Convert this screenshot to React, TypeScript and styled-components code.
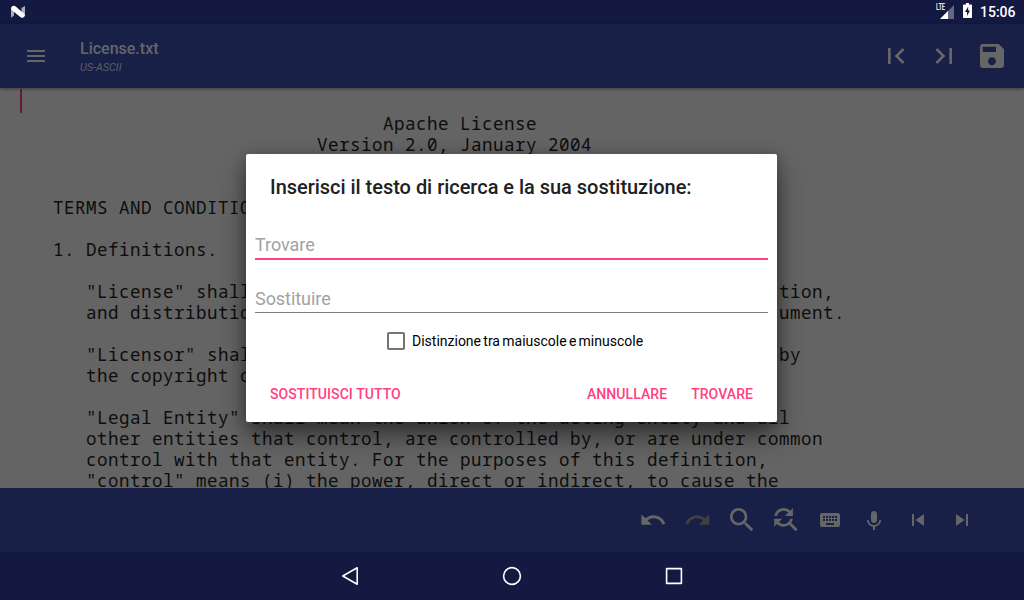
import React from "react";
import styled, { createGlobalStyle } from "styled-components";

const GlobalStyle = createGlobalStyle`
  * { box-sizing: border-box; }
  body { margin: 0; overflow: hidden; font-family: Roboto, "Liberation Sans", sans-serif; }
`;

const Screen = styled.div`
  position: relative;
  display: flex;
  flex-direction: column;
  width: 1024px;
  height: 600px;
  overflow: hidden;
  background: #646464;
`;

const StatusBar = styled.header`
  display: flex;
  align-items: center;
  justify-content: space-between;
  height: 24px;
  flex: none;
  padding: 0 8px 0 10px;
  background: #131940;
`;

const StatusIcons = styled.div`
  display: flex;
  align-items: center;
  height: 24px;
`;

const Network = styled.span`
  align-self: flex-start;
  width: 10px;
  margin: 2px -6px 0 0;
  font: 700 9px/11px Roboto, sans-serif;
  color: #e8e8ee;
  transform: scaleX(0.62);
  transform-origin: left center;
`;

const SignalIcon = styled.svg`
  flex: none;
`;

const BatteryIcon = styled.svg`
  flex: none;
  margin: 0 0 3px 9px;
`;

const Clock = styled.time`
  margin-left: 8px;
  width: 36px;
  font: 500 14px/24px Roboto, sans-serif;
  color: #fff;
  white-space: nowrap;
`;

const AppBar = styled.div`
  position: relative;
  z-index: 1;
  display: flex;
  align-items: center;
  height: 64px;
  flex: none;
  padding: 0 16px 0 24px;
  background: #192048;
  color: #666;
  box-shadow: 0 1px 3px rgba(0, 0, 0, 0.4);
`;

const Titles = styled.div`
  flex: 1;
  margin-left: 32px;
  padding-top: 3px;
`;

const FileName = styled.h1`
  margin: 0;
  font: 500 16px/20px Roboto, sans-serif;
`;

const Encoding = styled.p`
  margin: 0;
  padding-top: 1px;
  font: italic 400 11px/16px Roboto, sans-serif;
  letter-spacing: -0.1px;
  color: #5b5d65;
`;

const Actions = styled.div`
  display: flex;
  gap: 16px;
`;

const Editor = styled.main`
  display: flex;
  align-items: flex-start;
  height: 400px;
  flex: none;
  overflow: hidden;
  padding: 1px 0 0 20px;
`;

const Caret = styled.span`
  width: 2px;
  height: 24px;
  margin-right: -2px;
  background: #661a34;
`;

const Source = styled.pre`
  margin: 3px 0 0;
  font-family: "Droid Sans Mono", "Noto Sans Mono", "DejaVu Sans Mono", monospace;
  font-size: 17.5px;
  line-height: 21px;
  letter-spacing: 0.5px;
  color: #0d0d0d;
`;

const Toolbar = styled.div`
  display: flex;
  align-items: center;
  justify-content: flex-end;
  height: 64px;
  flex: none;
  padding-right: 40px;
  background: #192048;
  color: #666;
`;

const ToolButton = styled.span<{ $disabled?: boolean }>`
  display: flex;
  align-items: center;
  justify-content: center;
  width: 44px;
  height: 44px;
  color: ${(p) => (p.$disabled ? "#404040" : "#666")};
`;

const NavBar = styled.nav`
  display: flex;
  align-items: center;
  justify-content: center;
  gap: 138px;
  height: 48px;
  flex: none;
  background: #131940;
`;

const Dialog = styled.section`
  position: absolute;
  z-index: 2;
  left: 246px;
  top: 154px;
  width: 531px;
  height: 268px;
  padding: 20px 9px 0;
  border-radius: 2px;
  background: #fff;
  box-shadow: 0 14px 26px rgba(0, 0, 0, 0.45), 0 2px 14px rgba(0, 0, 0, 0.25);
`;

const DialogTitle = styled.h2`
  margin: 0 15px 33px;
  font: 500 20px/26px Roboto, sans-serif;
  letter-spacing: -0.025px;
  color: #212121;
  white-space: nowrap;
`;

const Field = styled.div<{ $focused?: boolean }>`
  height: ${(p) => (p.$focused ? 27 : 26)}px;
  margin-bottom: ${(p) => (p.$focused ? 27 : 0)}px;
  border-bottom: ${(p) => (p.$focused ? "2px solid #ff4081" : "1px solid #7c7c7c")};
  font: 400 18px/24px Roboto, sans-serif;
  letter-spacing: -0.05px;
  color: #a2a2a2;
`;

const CheckRow = styled.label`
  display: flex;
  align-items: center;
  margin: 19px 0 0 132px;
  height: 18px;
  gap: 7px;
  font: 400 14px/18px Roboto, sans-serif;
  word-spacing: -1.2px;
  color: #000;
  white-space: nowrap;
`;

const Box = styled.span`
  width: 18px;
  height: 18px;
  border: 2px solid #747474;
  border-radius: 2px;
`;

const DialogActions = styled.div`
  display: flex;
  gap: 24px;
  margin: 34px 15px 0;
`;

const DialogButton = styled.span<{ $start?: boolean }>`
  margin-right: ${(p) => (p.$start ? "auto" : "0")};
  font: 500 14px/20px Roboto, sans-serif;
  letter-spacing: 0.07px;
  color: #ff4081;
  white-space: nowrap;
`;

const icons = {
  menu: "M3 18h18v-2H3v2zm0-5h18v-2H3v2zm0-7v2h18V6H3z",
  first: "M18.41 16.59L13.82 12l4.59-4.59L17 6l-6 6 6 6zM6 6h2v12H6z",
  last: "M5.59 7.41L10.18 12l-4.59 4.59L7 18l6-6-6-6zM16 6h2v12h-2z",
  save: "M17 3H5c-1.11 0-2 .9-2 2v14c0 1.1.89 2 2 2h14c1.1 0 2-.9 2-2V7l-4-4zm-5 16c-1.66 0-3-1.34-3-3s1.34-3 3-3 3 1.34 3 3-1.34 3-3 3zm3-10H5V5h10v4z",
  undo: "M12.5 8c-2.65 0-5.05.99-6.9 2.6L2 7v9h9l-3.62-3.62c1.39-1.16 3.16-1.88 5.12-1.88 3.54 0 6.55 2.31 7.6 5.5l2.37-.78C21.08 11.03 17.15 8 12.5 8z",
  redo: "M18.4 10.6C16.55 8.99 14.15 8 11.5 8c-4.65 0-8.58 3.03-9.96 7.22L3.9 16c1.05-3.19 4.05-5.5 7.6-5.5 1.95 0 3.73.72 5.12 1.88L13 16h9V7l-3.6 3.6z",
  search: "M15.5 14h-.79l-.28-.27C15.41 12.59 16 11.11 16 9.5 16 5.91 13.09 3 9.5 3S3 5.91 3 9.5 5.91 16 9.5 16c1.61 0 3.09-.59 4.23-1.57l.27.28v.79l5 4.99L20.49 19l-4.99-5zm-6 0C7.01 14 5 11.99 5 9.5S7.01 5 9.5 5 14 7.01 14 9.5 11.99 14 9.5 14z",
  replace: "M11 6c1.38 0 2.63.56 3.54 1.46L12 10h6V4l-2.05 2.05C14.68 4.78 12.93 4 11 4c-3.53 0-6.43 2.61-6.92 6H6.1c.46-2.28 2.48-4 4.9-4zm5.64 9.14c.66-.9 1.12-1.97 1.28-3.14H15.9c-.46 2.28-2.48 4-4.9 4-1.38 0-2.63-.56-3.54-1.46L10 12H4v6l2.05-2.05C7.32 17.22 9.07 18 11 18c1.55 0 2.98-.51 4.14-1.36L20 21.49 21.49 20l-4.85-4.86z",
  keyboard: "M20 5H4c-1.1 0-1.99.9-1.99 2L2 17c0 1.1.9 2 2 2h16c1.1 0 2-.9 2-2V7c0-1.1-.9-2-2-2zm-9 3h2v2h-2V8zm0 3h2v2h-2v-2zM8 8h2v2H8V8zm0 3h2v2H8v-2zm-1 2H5v-2h2v2zm0-3H5V8h2v2zm9 7H8v-2h8v2zm0-4h-2v-2h2v2zm0-3h-2V8h2v2zm3 3h-2v-2h2v2zm0-3h-2V8h2v2z",
  mic: "M12 14c1.66 0 2.99-1.34 2.99-3L15 5c0-1.66-1.34-3-3-3S9 3.34 9 5v6c0 1.66 1.34 3 3 3zm5.3-3c0 3-2.54 5.1-5.3 5.1S6.7 14 6.7 11H5c0 3.41 2.72 6.23 6 6.72V21h2v-3.28c3.28-.48 6-3.3 6-6.72h-1.7z",
  previous: "M6 6h2v12H6zm3.5 6l8.5 6V6z",
  next: "M6 18l8.5-6L6 6v12zM16 6v12h2V6h-2z",
};

type IconName = keyof typeof icons;

const Glyph = ({ name, size = 24, box = "0 0 24 24" }: { name: IconName; size?: number; box?: string }) => (
  <svg width={size} height={size} viewBox={box} fill="currentColor" aria-hidden="true">
    <path d={icons[name]} />
  </svg>
);

const tools: { name: IconName; size?: number; box?: string; disabled?: boolean }[] = [
  { name: "undo", size: 28, box: "0.8 0 24 24" },
  { name: "redo", size: 28, box: "0.3 0 24 24", disabled: true },
  { name: "search", size: 32 },
  { name: "replace", size: 32, box: "0.8 1 24 24" },
  { name: "keyboard" },
  { name: "mic", box: "0 -1 24 24" },
  { name: "previous" },
  { name: "next" },
];

const license = `
                                 Apache License
                           Version 2.0, January 2004
                        http://www.apache.org/licenses/

   TERMS AND CONDITIONS FOR USE, REPRODUCTION, AND DISTRIBUTION

   1. Definitions.

      "License" shall mean the terms and conditions for use, reproduction,
      and distribution as defined by Sections 1 through 9 of this document.

      "Licensor" shall mean the copyright owner or entity authorized by
      the copyright owner that is granting the License.

      "Legal Entity" shall mean the union of the acting entity and all
      other entities that control, are controlled by, or are under common
      control with that entity. For the purposes of this definition,
      "control" means (i) the power, direct or indirect, to cause the`;

export default function App() {
  return (
    <>
      <GlobalStyle />
      <Screen>
        <StatusBar>
          <svg width="16" height="14" viewBox="0 0 16 14">
            <path d="M1 3 4 1v9.500L1 12.700zM11.500 3 15 1v10l-3.500 2z" fill="#a9abc0" />
            <path d="M1.200 3C1.500.9 4 .2 5.400 1.300l9 7.800c1 1.200-.2 3.500-2 3.700-.9 0-1.500-.3-2.100-.8L1.600 5z" fill="#fff" />
          </svg>
          <StatusIcons>
            <Network>LTE</Network>
            <SignalIcon width="14" height="14" viewBox="0 0 14 14">
              <path d="M14 0v14H0z" fill="#62668a" />
              <path d="M8 6v8H0z" fill="#fff" />
            </SignalIcon>
            <BatteryIcon width="9" height="15" viewBox="0 0 9 15">
              <path d="M3 0h3v1.500h2c.6 0 1 .4 1 1V14c0 .6-.4 1-1 1H1c-.6 0-1-.4-1-1V2.500c0-.6.4-1 1-1h2z" fill="#fff" />
              <path d="M5.200 3.500 2 9h2v4l3-5.500H5.200z" fill="#131940" />
            </BatteryIcon>
            <Clock>15:06</Clock>
          </StatusIcons>
        </StatusBar>
        <AppBar>
          <Glyph name="menu" />
          <Titles>
            <FileName>License.txt</FileName>
            <Encoding>US-ASCII</Encoding>
          </Titles>
          <Actions>
            <Glyph name="first" size={32} />
            <Glyph name="last" size={32} />
            <Glyph name="save" size={32} />
          </Actions>
        </AppBar>
        <Editor>
          <Caret />
          <Source>{license}</Source>
        </Editor>
        <Toolbar>
          {tools.map(({ disabled, ...icon }) => (
            <ToolButton key={icon.name} $disabled={disabled}>
              <Glyph {...icon} />
            </ToolButton>
          ))}
        </Toolbar>
        <NavBar>
          <svg width="24" height="24" viewBox="0 0 24 24" fill="none" stroke="#fff" strokeWidth="1.6" strokeLinejoin="round">
            <path d="M19.200 3.800v16.400L4.800 12z" />
          </svg>
          <svg width="24" height="24" viewBox="0 0 24 24" fill="none" stroke="#fff" strokeWidth="1.6">
            <circle cx="12" cy="12" r="8.400" />
          </svg>
          <svg width="24" height="24" viewBox="0 0 24 24" fill="none" stroke="#fff" strokeWidth="1.6" strokeLinejoin="round">
            <rect x="4.600" y="4.600" width="14.800" height="14.800" />
          </svg>
        </NavBar>
        <Dialog>
          <DialogTitle>Inserisci il testo di ricerca e la sua sostituzione:</DialogTitle>
          <Field $focused>Trovare</Field>
          <Field>Sostituire</Field>
          <CheckRow>
            <Box />
            Distinzione tra maiuscole e minuscole
          </CheckRow>
          <DialogActions>
            <DialogButton $start>SOSTITUISCI TUTTO</DialogButton>
            <DialogButton>ANNULLARE</DialogButton>
            <DialogButton>TROVARE</DialogButton>
          </DialogActions>
        </Dialog>
      </Screen>
    </>
  );
}
